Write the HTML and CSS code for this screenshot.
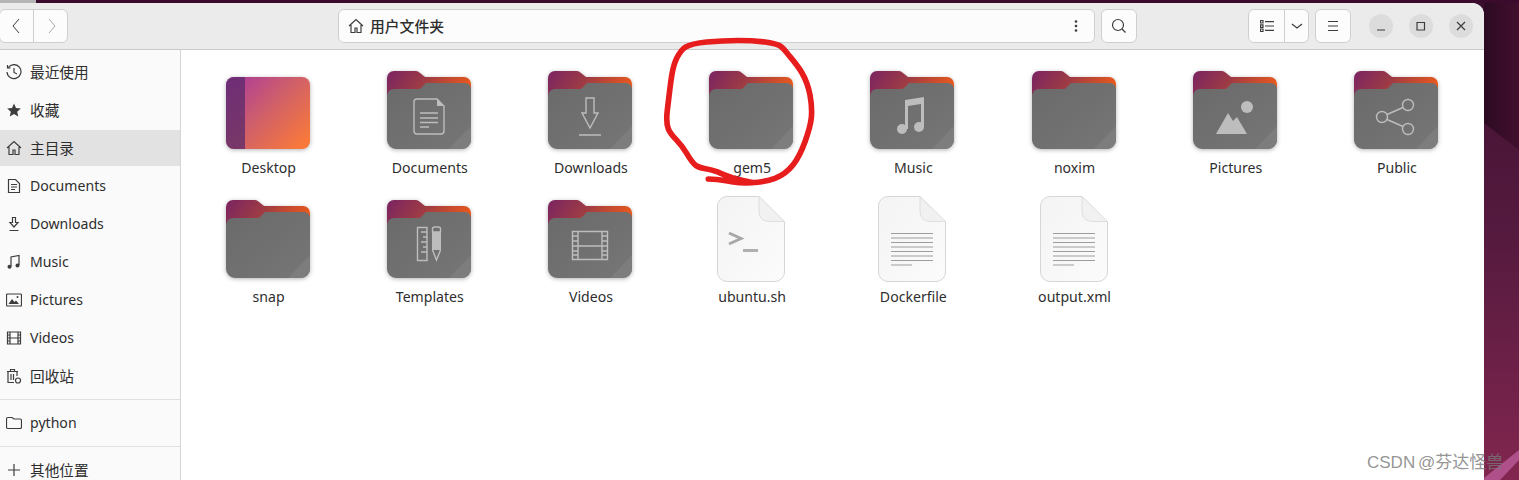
FILE: index.html
```html
<!DOCTYPE html>
<html lang="zh-CN">
<head>
  <meta charset="UTF-8">
  <title>用户文件夹</title>
  <link rel="stylesheet" href="styles.css">
</head>
<body>

  <!-- desktop wallpaper behind the window -->
  <svg class="wallpaper" width="1519" height="480" viewBox="0 0 1519 480">
    <defs>
      <linearGradient id="wallBase" x1="0" y1="0" x2="0" y2="1">
        <stop offset="0" stop-color="#3c1030"/>
        <stop offset="0.5" stop-color="#561a3f"/>
        <stop offset="1" stop-color="#82264f"/>
      </linearGradient>
      <linearGradient id="wallDark" x1="0" y1="0" x2="1" y2="0">
        <stop offset="0" stop-color="#2c0a22"/>
        <stop offset="1" stop-color="#420f2e"/>
      </linearGradient>
    </defs>
    <rect width="1519" height="480" fill="url(#wallBase)"/>
    <polygon points="1484,0 1519,0 1519,150 1484,123" fill="url(#wallDark)"/>
    <polygon points="1484,478 1519,450 1519,460 1500,480 1484,480" fill="#b0508a"/>
    <rect x="36" width="1483" height="3" fill="#3a0b2c"/>
    <rect width="36" height="3" fill="#b5b5b5"/>
  </svg>

  <!-- shared gradients and icon shapes -->
  <svg class="icon-defs" width="0" height="0">
    <defs>
      <linearGradient id="folderBack" x1="0" y1="0" x2="1" y2="0.35">
        <stop offset="0" stop-color="#7a2463"/>
        <stop offset="0.45" stop-color="#9c3a45"/>
        <stop offset="1" stop-color="#ec5a1c"/>
      </linearGradient>
      <linearGradient id="folderFront" x1="0" y1="0" x2="1" y2="1">
        <stop offset="0" stop-color="#6a6a6a"/>
        <stop offset="1" stop-color="#767676"/>
      </linearGradient>
      <linearGradient id="desktopFill" x1="0" y1="0" x2="1" y2="0.85">
        <stop offset="0" stop-color="#a8389f"/>
        <stop offset="0.5" stop-color="#cf5f6a"/>
        <stop offset="1" stop-color="#f9793a"/>
      </linearGradient>
      <linearGradient id="fileFill" x1="0" y1="0" x2="1" y2="1">
        <stop offset="0" stop-color="#f4f4f4"/>
        <stop offset="1" stop-color="#fbfbfb"/>
      </linearGradient>
      <symbol id="folder" viewBox="0 0 84 78">
        <path d="M0 30V7a7 7 0 0 1 7-7H29q2 0 4 2L38 6H77a7 7 0 0 1 7 7V40H0z" fill="url(#folderBack)"/>
        <path d="M0 25a7 7 0 0 1 7-7H32q1 0 2-1L39 12H78a6 6 0 0 1 6 6V69a9 9 0 0 1-9 9H9a9 9 0 0 1-9-9z" fill="url(#folderFront)"/>
        <path d="M84 55V69a9 9 0 0 1-9 9H62z" fill="#7d7d7d"/>
      </symbol>
      <symbol id="file" viewBox="0 0 68 86">
        <path d="M10 .5H42L67.5 26V76a9.5 9.5 0 0 1-9.5 9.5H10A9.5 9.5 0 0 1 .5 76V10A9.5 9.5 0 0 1 10 .5z" fill="url(#fileFill)" stroke="#d6d6d6"/>
        <path d="M42 .5V15q0 10 10 10.500H67.500z" fill="#f1f1f1" stroke="#dedede"/>
      </symbol>
      <symbol id="text-lines" viewBox="0 0 68 86">
        <path d="M13 37.500H55M13 42H55M13 46.500H55M13 51H55M13 55.500H55M13 60H55M13 64.500H55M13 69H34" stroke="#9d9d9d" fill="none"/>
      </symbol>
    </defs>
  </svg>

  <div class="window">
    <header class="toolbar">
      <div class="btn-group nav-group">
        <button class="tool-btn nav-btn">
          <svg width="16" height="18" viewBox="0 0 16 18"><path d="M10 2 4 9l6 7" class="line"/></svg>
        </button>
        <button class="tool-btn nav-btn">
          <svg width="16" height="18" viewBox="0 0 16 18"><path d="m6 2 6 7-6 7" class="line faint"/></svg>
        </button>
      </div>

      <div class="btn-group path-bar">
        <div class="path-label">
          <svg width="16" height="16" viewBox="0 0 16 16"><path d="M1 8 8 1.500 15 8M3 7v7.500h4V10h2v4.500h4V7" class="line"/></svg>
          <span>用户文件夹</span>
        </div>
        <button class="tool-btn path-menu">
          <svg width="4" height="14" viewBox="0 0 4 14"><circle cx="2" cy="2.500" r="1.300"/><circle cx="2" cy="7" r="1.300"/><circle cx="2" cy="11.500" r="1.300"/></svg>
        </button>
      </div>

      <div class="btn-group search-btn">
        <button class="tool-btn wide">
          <svg width="16" height="16" viewBox="0 0 16 16"><circle cx="7" cy="7" r="5.500" class="line"/><path d="m11 11 3.500 3.500" class="line"/></svg>
        </button>
      </div>

      <div class="btn-group view-group">
        <button class="tool-btn view-btn">
          <svg width="14" height="12" viewBox="0 0 14 12"><path d="M.5.500h2.500v2.500H.5zM.5 4.800h2.500v2.500H.5zM.5 9h2.500v2.500H.5zM5 1.700h9M5 6h9M5 10.300h9" class="line"/></svg>
        </button>
        <button class="tool-btn view-arrow">
          <svg width="12" height="8" viewBox="0 0 12 8"><path d="m1 2 5 4 5-4" class="line"/></svg>
        </button>
      </div>

      <div class="btn-group menu-btn">
        <button class="tool-btn wide">
          <svg width="12" height="12" viewBox="0 0 12 12"><path d="M1 1.500h10M1 6h10M1 10.500h10" class="line"/></svg>
        </button>
      </div>

      <div class="win-controls">
        <span class="win-btn"><svg width="10" height="10" viewBox="0 0 10 10"><path d="M1 9h8" class="line"/></svg></span>
        <span class="win-btn"><svg width="10" height="10" viewBox="0 0 10 10"><path d="M1 1.500h7.500V9H1z" class="line"/></svg></span>
        <span class="win-btn"><svg width="10" height="10" viewBox="0 0 10 10"><path d="m1 1 8 8M9 1 1 9" class="line"/></svg></span>
      </div>
    </header>

    <div class="content">
      <nav class="sidebar">
        <div class="side-row">
          <svg width="16" height="16" viewBox="0 0 16 16"><path d="M2.300 3.500A7 7 0 1 1 1 8M1.500 1v3h3M8 4v4.500l3 1.500" class="line"/></svg>
          <span>最近使用</span>
        </div>
        <div class="side-row">
          <svg width="16" height="16" viewBox="0 0 16 16"><path d="m8 1.500 2 4.500 4.800.500-3.600 3.200 1 4.800L8 12.100l-4.200 2.400 1-4.800L1.200 6.500 6 6z" class="solid"/></svg>
          <span>收藏</span>
        </div>
        <div class="side-row active">
          <svg width="16" height="16" viewBox="0 0 16 16"><path d="M1 8 8 1.500 15 8M3 7v7.500h4V10h2v4.500h4V7" class="line"/></svg>
          <span>主目录</span>
        </div>
        <div class="side-row">
          <svg width="16" height="16" viewBox="0 0 16 16"><path d="M2.500 1.500h7l4 4v9h-11zM5 6.500h6M5 9h6M5 11.500h4" class="line"/></svg>
          <span class="latin">Documents</span>
        </div>
        <div class="side-row">
          <svg width="16" height="16" viewBox="0 0 16 16"><path d="M6.500 1.500h3v5H12L8 11 4 6.500h2.500zM3.500 14.500h9" class="line"/></svg>
          <span class="latin">Downloads</span>
        </div>
        <div class="side-row">
          <svg width="16" height="16" viewBox="0 0 16 16"><path d="M5 12.500V3l8-1.500V11" class="line"/><circle cx="3.500" cy="12.700" r="2"/><circle cx="11.500" cy="11.500" r="2"/></svg>
          <span class="latin">Music</span>
        </div>
        <div class="side-row">
          <svg width="16" height="16" viewBox="0 0 16 16"><rect x=".5" y="2" width="15" height="12" rx="1" class="line"/><path d="M2.500 12 6 7l2.500 3 1.500-1.500 3 3.500z" class="solid"/><circle cx="11.500" cy="5" r="1"/></svg>
          <span class="latin">Pictures</span>
        </div>
        <div class="side-row">
          <svg width="16" height="16" viewBox="0 0 16 16"><path d="M1.500 2h13v12h-13zM4 2v12M12 2v12M4 8h8M1.500 5H4M1.500 8H4M1.500 11H4M12 5h2.500M12 8h2.500M12 11h2.500" class="line"/></svg>
          <span class="latin">Videos</span>
        </div>
        <div class="side-row">
          <svg width="16" height="16" viewBox="0 0 16 16"><path d="M1 3.500h11M4.500 3V1.500h4V3M2 3.500V14.500h6M11 3.500V8M5 6v6M7.500 6v6" class="line"/><circle cx="12" cy="12.500" r="2.500" class="line"/></svg>
          <span>回收站</span>
        </div>
        <div class="side-sep"></div>
        <div class="side-row">
          <svg width="16" height="16" viewBox="0 0 16 16"><path d="M.5 4a1.500 1.500 0 0 1 1.500-1.500h4L8 4h6a1.500 1.500 0 0 1 1.500 1.500V12A1.500 1.500 0 0 1 14 13.500H2A1.500 1.500 0 0 1 .5 12z" class="line"/></svg>
          <span class="latin">python</span>
        </div>
        <div class="side-sep"></div>
        <div class="side-row">
          <svg width="16" height="16" viewBox="0 0 16 16"><path d="M8 2v12M2 8h12" class="line"/></svg>
          <span>其他位置</span>
        </div>
      </nav>

      <main class="files">
        <div class="file-item">
          <div class="icon-box">
            <svg class="folder-icon desktop-icon" width="84" height="72" viewBox="0 0 84 72">
              <rect width="84" height="72" rx="8" fill="url(#desktopFill)"/>
              <path d="M8 0H19V72H8a8 8 0 0 1-8-8V8a8 8 0 0 1 8-8z" fill="#5a2a6a" fill-opacity=".75"/>
            </svg>
          </div>
          <span class="file-name">Desktop</span>
        </div>
        <div class="file-item">
          <div class="icon-box">
            <svg class="folder-icon" width="84" height="78" viewBox="0 0 84 78">
              <use href="#folder"/>
              <g class="glyph-line">
                <path d="M30 28H50L57 35V60a3 3 0 0 1-3 3H30a3 3 0 0 1-3-3V31a3 3 0 0 1 3-3z"/>
                <path d="M33 42H51M33 47H51M33 51.500H51M33 56H42"/>
              </g>
              <path d="M50 28 57 35H50z" class="glyph-fill"/>
            </svg>
          </div>
          <span class="file-name">Documents</span>
        </div>
        <div class="file-item">
          <div class="icon-box">
            <svg class="folder-icon" width="84" height="78" viewBox="0 0 84 78">
              <use href="#folder"/>
              <path class="glyph-line" d="M38 27H46V42H50L42 57 34 42H38zM31 64H53"/>
            </svg>
          </div>
          <span class="file-name">Downloads</span>
        </div>
        <div class="file-item">
          <div class="icon-box">
            <svg class="folder-icon" width="84" height="78" viewBox="0 0 84 78">
              <use href="#folder"/>
            </svg>
          </div>
          <span class="file-name">gem5</span>
        </div>
        <div class="file-item">
          <div class="icon-box">
            <svg class="folder-icon" width="84" height="78" viewBox="0 0 84 78">
              <use href="#folder"/>
              <path class="glyph-fill" d="M35 29 54 26V56H51V33L38 35V58H35z"/>
              <circle class="glyph-fill" cx="32" cy="58" r="5"/>
              <circle class="glyph-fill" cx="49" cy="56" r="5"/>
            </svg>
          </div>
          <span class="file-name">Music</span>
        </div>
        <div class="file-item">
          <div class="icon-box">
            <svg class="folder-icon" width="84" height="78" viewBox="0 0 84 78">
              <use href="#folder"/>
            </svg>
          </div>
          <span class="file-name">noxim</span>
        </div>
        <div class="file-item">
          <div class="icon-box">
            <svg class="folder-icon" width="84" height="78" viewBox="0 0 84 78">
              <use href="#folder"/>
              <circle class="glyph-fill" cx="54" cy="36" r="6"/>
              <path class="glyph-fill" d="M23 63 35 42 40 50 44 46 54 63z"/>
            </svg>
          </div>
          <span class="file-name">Pictures</span>
        </div>
        <div class="file-item">
          <div class="icon-box">
            <svg class="folder-icon" width="84" height="78" viewBox="0 0 84 78">
              <use href="#folder"/>
              <g class="glyph-line">
                <circle cx="28" cy="46" r="5.500"/>
                <circle cx="54" cy="34" r="5.500"/>
                <circle cx="54" cy="58" r="5.500"/>
                <path d="M33 43.500 49 36.500M33 48.500 49 55.500"/>
              </g>
            </svg>
          </div>
          <span class="file-name">Public</span>
        </div>

        <div class="file-item">
          <div class="icon-box">
            <svg class="folder-icon" width="84" height="78" viewBox="0 0 84 78">
              <use href="#folder"/>
            </svg>
          </div>
          <span class="file-name">snap</span>
        </div>
        <div class="file-item">
          <div class="icon-box">
            <svg class="folder-icon" width="84" height="78" viewBox="0 0 84 78">
              <use href="#folder"/>
              <path class="glyph-line" d="M30.500 27.500H40V60.500H30.500zM34 32H40M36 37H40M34 42H40M36 47H40M34 52H40"/>
              <path class="glyph-line" d="M45.500 32V29a2 2 0 0 1 2-2h4a2 2 0 0 1 2 2v3zM45.500 50 49.500 60 53.500 50"/>
              <path class="glyph-fill" d="M45 32H54V50H45z"/>
            </svg>
          </div>
          <span class="file-name">Templates</span>
        </div>
        <div class="file-item">
          <div class="icon-box">
            <svg class="folder-icon" width="84" height="78" viewBox="0 0 84 78">
              <use href="#folder"/>
              <path class="glyph-line" d="M24.500 31.500H59.500V59.500H24.500zM30 31.500V59.500M54 31.500V59.500M30 46H54M24.500 36H30M24.500 41H30M24.500 46H30M24.500 51H30M24.500 55H30M54 36H59.500M54 41H59.500M54 46H59.500M54 51H59.500M54 55H59.500"/>
            </svg>
          </div>
          <span class="file-name">Videos</span>
        </div>
        <div class="file-item">
          <div class="icon-box">
            <svg width="68" height="86" viewBox="0 0 68 86">
              <use href="#file"/>
              <path d="M12 37 24 42.500 12 48" fill="none" stroke="#a8a8a8" stroke-width="3"/>
              <path d="M26 54.500H41" fill="none" stroke="#b0b0b0" stroke-width="3"/>
            </svg>
          </div>
          <span class="file-name">ubuntu.sh</span>
        </div>
        <div class="file-item">
          <div class="icon-box">
            <svg width="68" height="86" viewBox="0 0 68 86">
              <use href="#file"/>
              <use href="#text-lines"/>
            </svg>
          </div>
          <span class="file-name">Dockerfile</span>
        </div>
        <div class="file-item">
          <div class="icon-box">
            <svg width="68" height="86" viewBox="0 0 68 86">
              <use href="#file"/>
              <use href="#text-lines"/>
            </svg>
          </div>
          <span class="file-name">output.xml</span>
        </div>
      </main>
    </div>
  </div>

  <!-- red hand-drawn circle round gem5 -->
  <svg class="scribble" width="320" height="160" viewBox="0 0 960 480">
    <path d="M175 447C200 447 225 452 250 456S330 462 375 445 445 390 465 335 490 250 480 195 445 110 420 80 395 42 345 36 235 30 170 36 95 55 80 85 62 160 52 240 75 310 110 370 150 405 200 425 255 448 310 458"/>
  </svg>

  <div class="watermark">CSDN @芬达怪兽</div>

</body>
</html>
```

FILE: styles.css
```css
body {
  margin: 0;
  height: 480px;
  overflow: hidden;
  padding-top: 3px;
  box-sizing: border-box;
  font-family: "Noto Sans", "Noto Sans CJK SC", sans-serif;
  font-size: 14.67px;
  color: #2e2e2e;
}

.wallpaper {
  position: absolute;
  left: 0;
  top: 0;
}

.icon-defs {
  position: absolute;
}

.line {
  fill: none;
  stroke: #3d3d3d;
  stroke-width: 1.2;
}

.nav-btn .line {
  stroke-width: 1;
}

.line.faint {
  stroke: #a8a8a8;
}

.solid {
  fill: #3d3d3d;
}

.window {
  position: relative;
  width: 1484px;
  height: 477px;
  overflow: hidden;
  border-top-right-radius: 12px;
  background: #fff;
}

/* header bar */
.toolbar {
  display: flex;
  align-items: flex-start;
  height: 47px;
  box-sizing: border-box;
  padding-top: 6px;
  background: #ebebeb;
  border-bottom: 1px solid #c9c9c9;
}

.btn-group {
  display: flex;
  height: 34px;
  box-sizing: border-box;
  background: #fcfcfc;
  border: 1px solid #cfcfcf;
  border-radius: 6px;
}

.tool-btn {
  display: flex;
  align-items: center;
  justify-content: center;
  padding: 0;
  border: none;
  background: none;
  fill: #3d3d3d;
}

.tool-btn + .tool-btn {
  border-left: 1px solid #cfcfcf;
}

.nav-group {
  width: 69px;
  margin-left: -1px;
}

.nav-btn {
  flex: 1;
}

.path-bar {
  width: 757px;
  margin-left: 270px;
}

.path-label {
  flex: 1;
  display: flex;
  align-items: center;
  gap: 6px;
  padding-left: 9px;
  font-size: 14.8px;
  font-weight: 500;
}

.path-label span {
  margin-top: -2px;
}

.path-menu {
  width: 36px;
}

.search-btn {
  width: 36px;
  margin-left: 6px;
}

.wide {
  flex: 1;
}

.view-group {
  width: 61px;
  margin-left: 111px;
}

.view-btn {
  width: 35px;
}

.view-arrow {
  flex: 1;
}

.menu-btn {
  width: 36px;
  margin-left: 6px;
}

.win-controls {
  display: flex;
  gap: 16px;
  margin: 5px 0 0 18px;
}

.win-btn {
  display: flex;
  align-items: center;
  justify-content: center;
  width: 24px;
  height: 24px;
  border-radius: 50%;
  background: #dcdcdc;
}

/* sidebar + icon grid */
.content {
  display: flex;
  height: 430px;
}

.sidebar {
  flex: none;
  width: 180px;
  padding-top: 4px;
  background: #fafafa;
  border-right: 1px solid #d6d6d6;
}

.side-row {
  display: flex;
  align-items: center;
  gap: 8px;
  height: 36px;
  margin-bottom: 2px;
  padding-left: 6px;
  fill: #3d3d3d;
}

.side-row span {
  margin-top: -2px;
}

.side-row .latin {
  font-size: 14.1px;
}

.side-row.active {
  background: #e2e2e2;
}

.side-sep {
  height: 1px;
  margin: 5px 0;
  background: #e0e0e0;
}

.files {
  flex: 1;
  display: grid;
  grid-template-columns: repeat(8, 161.2px);
  grid-auto-rows: 116px;
  row-gap: 13px;
  align-content: start;
  padding: 12px 0 0 6px;
}

.file-item {
  display: flex;
  flex-direction: column;
  align-items: center;
}

.icon-box {
  display: flex;
  align-items: center;
  justify-content: center;
  height: 96px;
}

.folder-icon {
  filter: drop-shadow(0 1px 2px rgba(0, 0, 0, 0.3));
}

.desktop-icon {
  margin-top: 6px;
}

.glyph-line {
  fill: none;
  stroke: #bdbdbd;
  stroke-width: 1.4;
}

.glyph-fill {
  fill: #bdbdbd;
}

.file-name {
  padding-left: 2px;
  font-size: 14.1px;
  line-height: 20px;
}

/* overlays */
.scribble {
  position: absolute;
  left: 650px;
  top: 30px;
}

.scribble path {
  fill: none;
  stroke: #e71c1c;
  stroke-width: 17;
  stroke-linecap: round;
  stroke-linejoin: round;
}

.watermark {
  position: absolute;
  left: 1367px;
  top: 448px;
  font-family: "Liberation Sans", "Noto Sans CJK SC", sans-serif;
  font-size: 17px;
  word-spacing: -2px;
  color: rgba(120, 120, 120, 0.8);
}
```
